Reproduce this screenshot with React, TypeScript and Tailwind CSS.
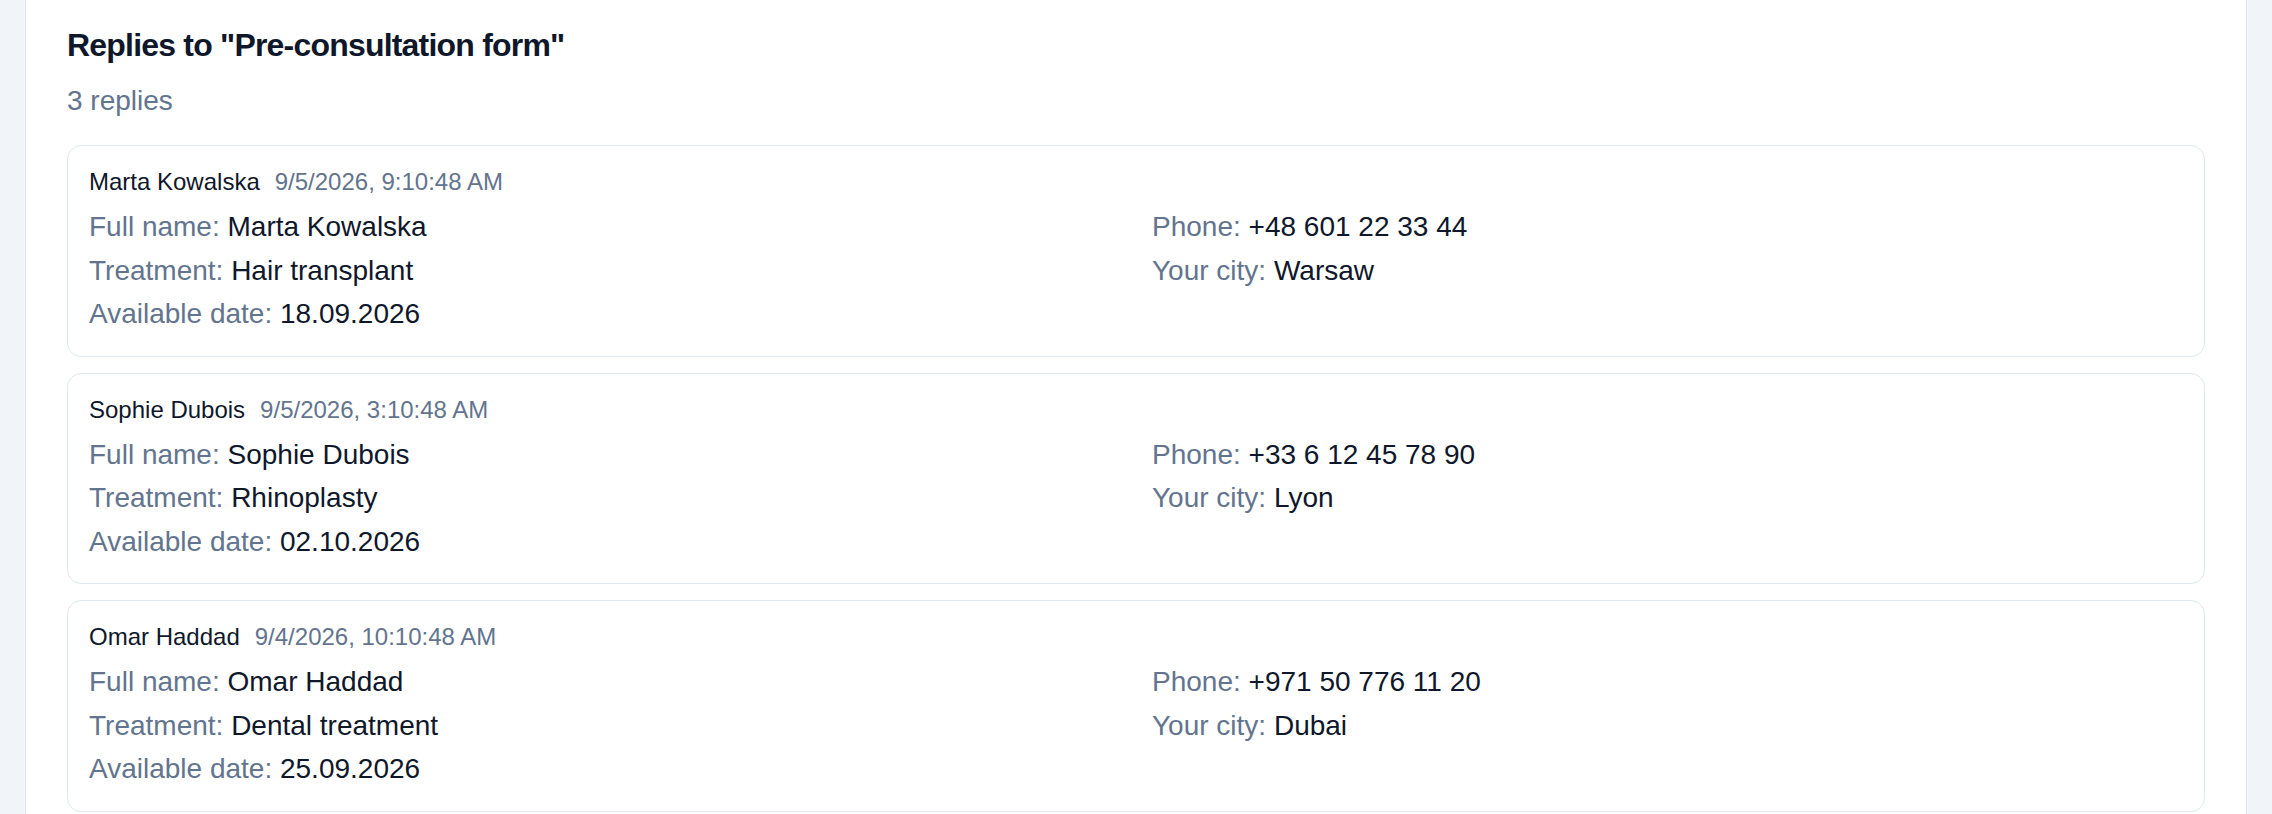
const replies = [
  {
    name: 'Marta Kowalska',
    date: '9/5/2026, 9:10:48 AM',
    phone: '+48 601 22 33 44',
    treatment: 'Hair transplant',
    city: 'Warsaw',
    available: '18.09.2026'
  },
  {
    name: 'Sophie Dubois',
    date: '9/5/2026, 3:10:48 AM',
    phone: '+33 6 12 45 78 90',
    treatment: 'Rhinoplasty',
    city: 'Lyon',
    available: '02.10.2026'
  },
  {
    name: 'Omar Haddad',
    date: '9/4/2026, 10:10:48 AM',
    phone: '+971 50 776 11 20',
    treatment: 'Dental treatment',
    city: 'Dubai',
    available: '25.09.2026'
  }
];

type Reply = (typeof replies)[number];

const Field = ({ label, value }: { label: string; value: string }) => (
  <div className="text-[28px] leading-[43.5px]">
    <span className="text-slate-500">{label}: </span>
    <span className="text-slate-900">{value}</span>
  </div>
);

const ReplyCard = ({ reply }: { reply: Reply }) => (
  <div className="rounded-[14px] border border-slate-200 bg-white px-[21px] pt-[18px] pb-[20px]">
    <div className="mb-[5px] flex items-baseline gap-[15px] text-[24px] leading-[36px]">
      <span className="text-slate-900">{reply.name}</span>
      <span className="text-slate-500">{reply.date}</span>
    </div>
    <div className="grid grid-cols-2 gap-x-8">
      <Field label="Full name" value={reply.name} />
      <Field label="Phone" value={reply.phone} />
      <Field label="Treatment" value={reply.treatment} />
      <Field label="Your city" value={reply.city} />
      <Field label="Available date" value={reply.available} />
    </div>
  </div>
);

export default function App() {
  return (
    <div
      className="min-h-screen overflow-hidden bg-[#f1f5f9] px-[25px]"
      style={{ fontFamily: '"Liberation Sans", Arial, sans-serif' }}
    >
      <div className="-mt-[16px] rounded-xl border border-slate-200 bg-white px-[41px] pt-10 pb-10">
        <h2 className="text-[32px] leading-10 font-bold tracking-tight text-slate-900">
          Replies to "Pre-consultation form"
        </h2>
        <p className="mt-[15px] text-[28px] leading-[42px] text-slate-500">
          {replies.length} replies
        </p>
        <div className="mt-[23px] flex flex-col gap-[16px]">
          {replies.map((r) => (
            <ReplyCard key={r.name} reply={r} />
          ))}
        </div>
      </div>
    </div>
  );
}
